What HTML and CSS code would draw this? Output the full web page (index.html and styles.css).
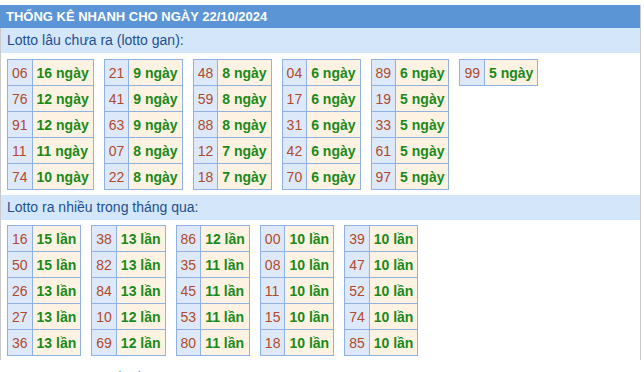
FILE: index.html
```html
<!DOCTYPE html>
<html lang="vi">
<head>
  <meta charset="UTF-8" />
  <meta name="viewport" content="width=device-width, initial-scale=1.0"/>
  <title>Thống kê nhanh</title>
  <link rel="stylesheet" href="styles.css">
</head>
<body>
  <div class="box">
    <div class="box-title">THỐNG KÊ NHANH CHO NGÀY 22/10/2024</div>

    <div class="sub-title">Lotto lâu chưa ra (lotto gan):</div>
    <div class="tables first" id="gan"></div>

    <div class="sub-title">Lotto ra nhiều trong tháng qua:</div>
    <div class="tables" id="nhieu"></div>
  </div>
  <div class="more">Lô về đầu đuôi</div>

  <script>
    // moi cot la mot bang nho: [so, gia tri]
    const gan = [
      [["06", 16], ["76", 12], ["91", 12], ["11", 11], ["74", 10]],
      [["21", 9], ["41", 9], ["63", 9], ["07", 8], ["22", 8]],
      [["48", 8], ["59", 8], ["88", 8], ["12", 7], ["18", 7]],
      [["04", 6], ["17", 6], ["31", 6], ["42", 6], ["70", 6]],
      [["89", 6], ["19", 5], ["33", 5], ["61", 5], ["97", 5]],
      [["99", 5]]
    ];
    const nhieu = [
      [["16", 15], ["50", 15], ["26", 13], ["27", 13], ["36", 13]],
      [["38", 13], ["82", 13], ["84", 13], ["10", 12], ["69", 12]],
      [["86", 12], ["35", 11], ["45", 11], ["53", 11], ["80", 11]],
      [["00", 10], ["08", 10], ["11", 10], ["15", 10], ["18", 10]],
      [["39", 10], ["47", 10], ["52", 10], ["74", 10], ["85", 10]]
    ];

    function render(id, cols, unit) {
      const wrap = document.getElementById(id);
      cols.forEach(col => {
        const table = document.createElement("table");
        table.className = "mini";
        col.forEach(([num, val]) => {
          const tr = document.createElement("tr");
          tr.innerHTML = '<td class="num">' + num + '</td><td class="val">' + val + ' ' + unit + '</td>';
          table.appendChild(tr);
        });
        wrap.appendChild(table);
      });
    }

    render("gan", gan, "ngày");
    render("nhieu", nhieu, "lần");
  </script>
</body>
</html>
```

FILE: styles.css
```css
body {
  margin: 0;
  padding-top: 5px;
  font-family: "Liberation Sans", Arial, sans-serif;
  background: #ffffff;
}
.box {
  width: 639px;
  border-left: 1px solid #c9c9c9;
  border-right: 1px solid #c9c9c9;
}
.box-title {
  background-color: #5b95d5;
  color: #ffffff;
  font-weight: bold;
  font-size: 13px;
  height: 23px;
  line-height: 23px;
  padding-left: 6px;
  margin-left: -1px;
}
.sub-title {
  background-color: #d4e7fa;
  color: #1d4f90;
  font-size: 14px;
  height: 25px;
  line-height: 25px;
  padding-left: 6px;
}
.tables {
  display: flex;
  align-items: flex-start;
  gap: 10px;
  padding: 5px 6px 4px;
}
.tables.first {
  padding-top: 6px;
  padding-bottom: 5px;
}
.mini {
  border-collapse: collapse;
  font-size: 14px;
}
.mini td {
  border: 1px solid #90b2e2;
  height: 25px;
  padding: 0 4px;
  white-space: nowrap;
}
.mini .num {
  background-color: #dde9f9;
  color: #b04a2c;
}
.mini .val {
  background-color: #fef3e3;
  color: #1a8a1a;
  font-weight: bold;
}
.more {
  margin-top: 10px;
  padding-left: 92px;
  color: #1d4f90;
  font-size: 14px;
}
```
